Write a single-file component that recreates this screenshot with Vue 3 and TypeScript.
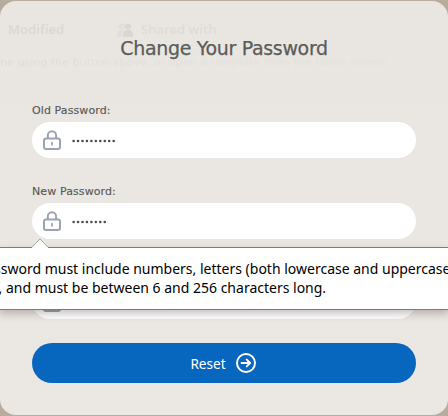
<script setup lang="ts">
import { ref } from 'vue'

const fields = ref([
  { id: 'old', label: 'Old Password:', length: 10 },
  { id: 'new', label: 'New Password:', length: 8 },
  { id: 'confirm', label: 'Confirm Password:', length: 8 },
])
</script>

<template>
  <main class="screen">
    <section class="dialog">
      <div class="backdrop" aria-hidden="true">
        <span class="ghost modified">Modified</span>
        <svg class="people" width="17" height="15" viewBox="0 0 17 15">
          <circle cx="5" cy="3.4" r="3" opacity=".45" />
          <path d="M0 14v-3q0-4 4-4h2q-1 1-1 7z" opacity=".45" />
          <circle cx="11" cy="3.4" r="3" />
          <path d="M6 14v-3q0-4 4-4h2q4 0 4 4v3z" />
        </svg>
        <span class="ghost shared">Shared with</span>
        <span class="ghost hint">ne using the button above, or open a template from the home screen.</span>
      </div>
      <h1>Change Your Password</h1>
      <form @submit.prevent>
        <div v-for="field in fields" :key="field.id" class="field">
          <label>{{ field.label }}</label>
          <div class="input">
            <svg class="lock" width="20" height="22" viewBox="0 0 20 22">
              <path d="M5.8 9.5V6.4a4.15 4.15 0 0 1 8.3 0V9.5" />
              <rect x="2" y="9.6" width="16" height="10.4" rx="2" />
              <path d="M10 13v3.6" />
            </svg>
            <svg class="dots" width="46" height="4" viewBox="0 0 46 4">
              <circle v-for="n in field.length" :key="n" :cx="1.6 + (n - 1) * 4.45" cy="2" r="1.3" />
            </svg>
          </div>
        </div>
        <button type="submit">
          <span>Reset</span>
          <svg width="20" height="20" viewBox="0 0 20 20">
            <circle cx="10" cy="10" r="9" />
            <path d="M5.6 10h8.4M10.7 6.6l3.4 3.4-3.4 3.4" />
          </svg>
        </button>
      </form>
    </section>
    <div class="tooltip">
      <svg class="arrow" width="18" height="10" viewBox="0 0 18 10">
        <path d="M1 9.2L9 1l8 8.2V10H1z" fill="#fff" />
        <path d="M1 9.2L9 1l8 8.2" fill="none" stroke="#a5a5a5" />
      </svg>
      <p class="first">ssword must include numbers, letters (both lowercase and uppercase)</p>
      <p class="second">, and must be between 6 and 256 characters long.</p>
    </div>
  </main>
</template>

<style>
body { margin: 0; overflow: hidden; }
</style>

<style scoped>
* { box-sizing: border-box; }
.screen {
  position: relative;
  width: 448px;
  height: 416px;
  padding: 1px 0;
  overflow: hidden;
  background: #b9ac9f;
  font-family: "Noto Sans", sans-serif;
}
.dialog {
  position: relative;
  height: 414px;
  padding: 0 32px;
  border-radius: 16px;
  background: linear-gradient(#e9e6e1, #ebe8e3);
  overflow: hidden;
}
.backdrop { position: absolute; inset: 0; }
.ghost { position: absolute; white-space: nowrap; line-height: 20px; }
.modified { left: 8px; top: 18px; font-size: 13px; font-weight: 600; color: #dbd8d4; }
.shared { left: 141px; top: 18px; font-size: 13px; font-weight: 600; color: #dfdcd7; }
.hint { left: 0; top: 52px; font: 11px/20px "DejaVu Sans", sans-serif; letter-spacing: .05px; background: linear-gradient(90deg, #dedbd6, #e3e0db 50%, #e4e1dc); -webkit-background-clip: text; background-clip: text; color: transparent; }
.people { position: absolute; left: 117px; top: 22px; fill: #dad7d3; }
h1 {
  position: relative;
  height: 101px;
  margin: 0;
  padding-top: 32px;
  text-align: center;
  color: #5b5b59;
  font: 400 19px/30px "DejaVu Sans", sans-serif;
  letter-spacing: -.33px;
  -webkit-text-stroke: .25px #5b5b59;
}
form { position: relative; }
.field { height: 81px; }
.field:nth-child(3) { height: 79px; }
.field:nth-child(3) .input { margin-top: -1px; }
.field:nth-child(3) .lock { margin-top: 1px; }
label {
  display: block;
  height: 20px;
  padding-top: 1px;
  color: #595957;
  font: 11px/16px "DejaVu Sans", sans-serif;
  letter-spacing: .1px;
  -webkit-text-stroke: .15px #595957;
}
.input {
  display: flex;
  align-items: center;
  height: 36px;
  padding-left: 10px;
  border-radius: 18px;
  background: #fff;
}
.lock { fill: none; stroke: #9ca3b4; stroke-width: 2; }
.lock path:last-child { stroke-width: 1.7; }
.dots { margin: 2px 0 0 10px; fill: #4b4b4a; }
button {
  display: flex;
  align-items: center;
  justify-content: center;
  gap: 10px;
  width: 384px;
  height: 40px;
  margin: 0;
  padding: 0 2px 1px 0;
  border: 0;
  border-radius: 20px;
  background: #0766be;
  color: #fff;
  font: 13.6px/20px "Noto Sans", sans-serif;
}
button span { padding-top: 2px; }
button svg { fill: none; stroke: #fff; stroke-width: 2; stroke-linecap: round; stroke-linejoin: round; }
.tooltip {
  position: absolute;
  left: -1px;
  top: 247px;
  width: 450px;
  height: 63px;
  padding-top: 11px;
  border: 1px solid #7b7b7b;
  background: #fff;
  box-shadow: 0 4px 8px rgba(60, 40, 40, .28);
  color: #000;
}
.arrow { position: absolute; left: 31px; top: -10px; }
.tooltip p { margin: 0; font-size: 14px; line-height: 19px; white-space: nowrap; }
.tooltip .first { margin-left: -6px; }
.tooltip .second { margin-left: -1.5px; }
</style>
